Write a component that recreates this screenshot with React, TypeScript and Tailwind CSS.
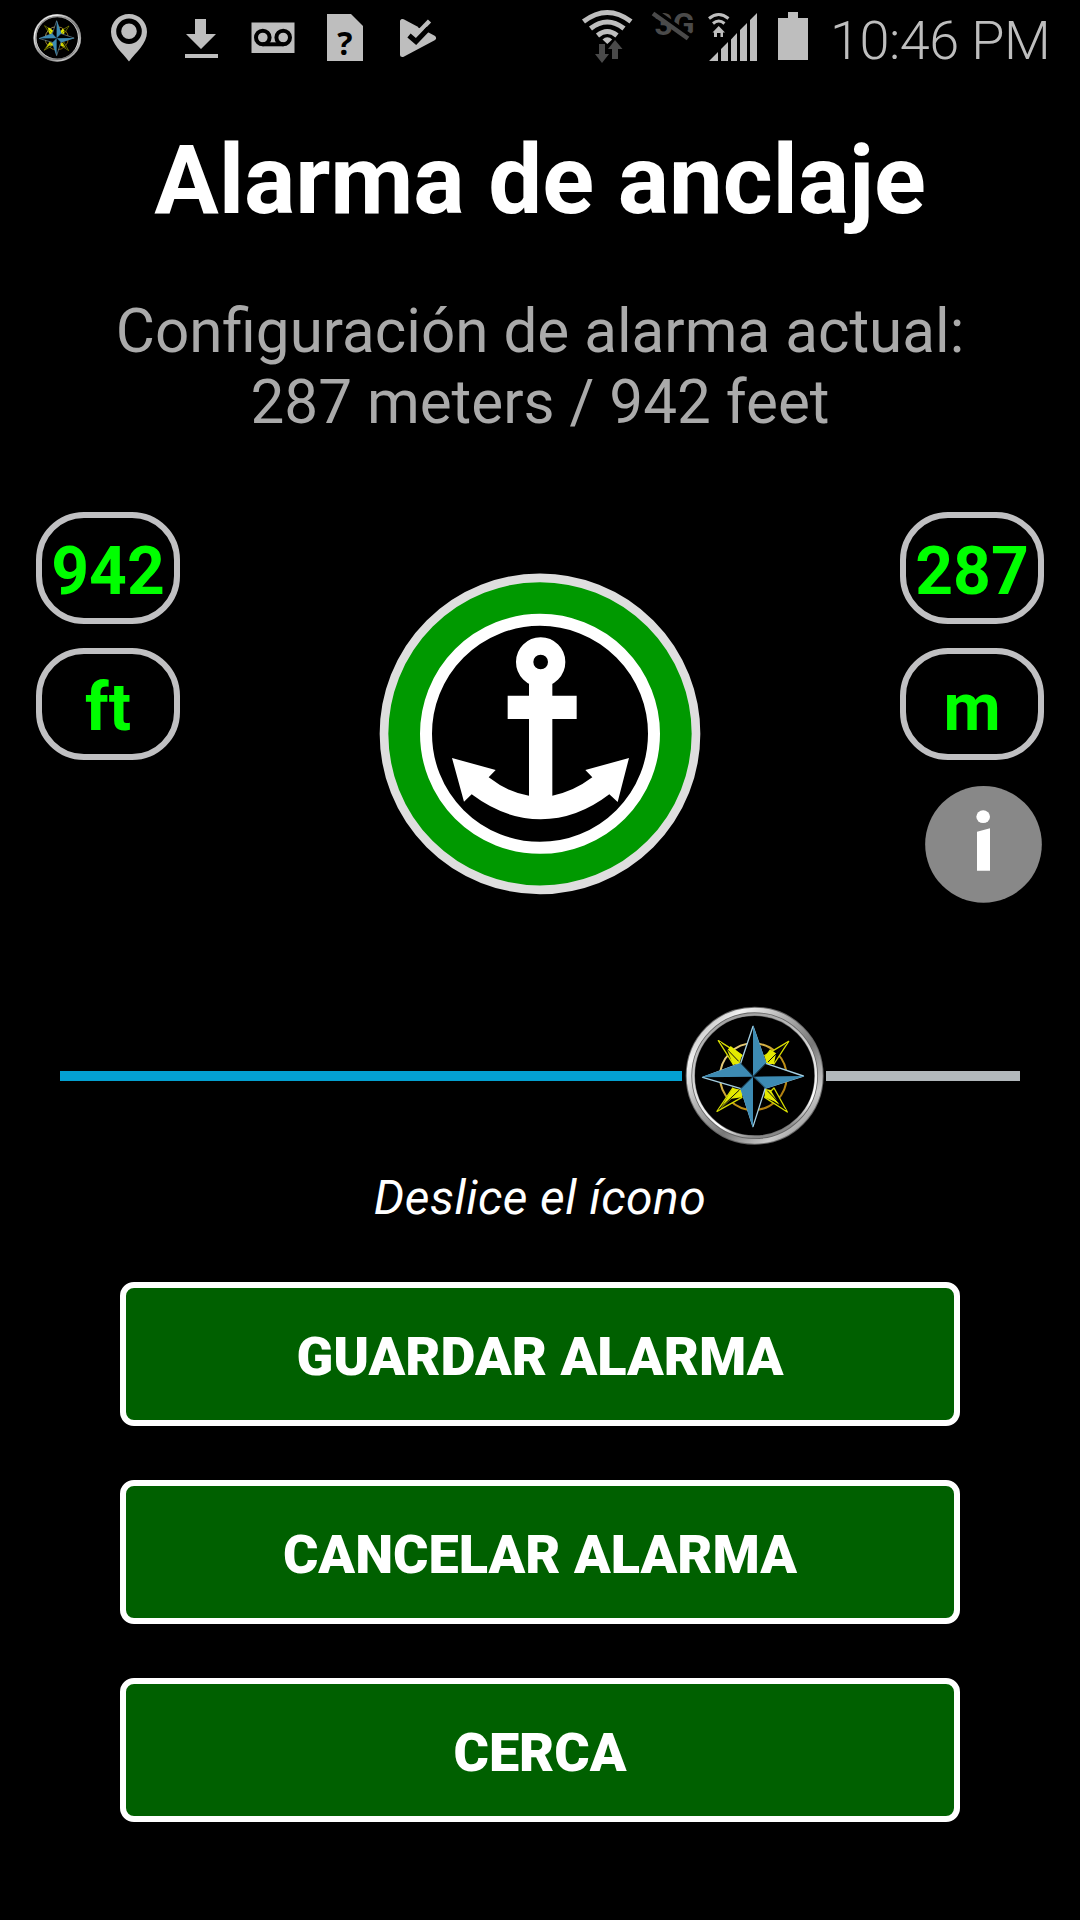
import { useId } from 'react';

function Compass({ className }: { className?: string }) {
  const id = useId();

  return (
    <svg className={className} viewBox="36 42 432 432">
      <defs>
        <linearGradient id={`${id}-rim`} x1="0" y1="0" x2="1" y2="1">
          <stop offset="0" stopColor="#8a8a8a" />
          <stop offset="0.2" stopColor="#f2f2f2" />
          <stop offset="0.38" stopColor="#b5b5b5" />
          <stop offset="0.6" stopColor="#777" />
          <stop offset="0.8" stopColor="#c9c9c9" />
          <stop offset="1" stopColor="#666" />
        </linearGradient>
        <linearGradient id={`${id}-edge`} x1="0.2" y1="0" x2="0.5" y2="1">
          <stop offset="0" stopColor="#999" />
          <stop offset="0.5" stopColor="#ddd" />
          <stop offset="0.85" stopColor="#fff" />
          <stop offset="1" stopColor="#888" />
        </linearGradient>
        <linearGradient id={`${id}-gold`} x1="0" y1="0" x2="1" y2="1">
          <stop offset="0" stopColor="#f3e3a8" />
          <stop offset="0.5" stopColor="#c79a1a" />
          <stop offset="1" stopColor="#a8740c" />
        </linearGradient>
      </defs>
      <circle cx="254" cy="257" r="193" fill="#000" stroke="#666" strokeWidth="28" />
      <circle cx="254" cy="257" r="197" fill="none" stroke={`url(#${id}-rim)`} strokeWidth="14" />
      <circle cx="254" cy="257" r="184" fill="none" stroke={`url(#${id}-edge)`} strokeWidth="7" />
      <circle cx="250" cy="260" r="100" fill="none" stroke={`url(#${id}-gold)`} strokeWidth="6" />
      <g fill="#000" stroke="#d6dc00" strokeWidth="4" strokeLinejoin="round">
        <path d="M145 152L216 196L190 223Z" />
        <path d="M356 154L312 222L284 197Z" />
        <path d="M352 366L284 322L312 294Z" />
        <path d="M141 364L188 294L216 322Z" />
      </g>
      <g fill="#e4ea00">
        <path d="M172 181L182 168L216 194L208 222L189 224Z" />
        <path d="M300 178L318 190L312 222L290 222L284 200Z" />
        <path d="M284 296L302 300L328 344L312 334L284 322Z" />
        <path d="M150 358L188 294L216 300L216 322L184 326Z" />
      </g>
      <g stroke="#111" strokeWidth="3">
        <path d="M150 156L206 214" />
        <path d="M350 160L294 216" />
        <path d="M347 360L292 302" />
        <path d="M146 359L208 300" />
      </g>
      <path
        d="M249 109L287 220L400 258L286 294L249 410L213 296L98 262L212 220Z"
        fill="#000"
        stroke="#a5cfe2"
        strokeWidth="4"
        strokeLinejoin="round"
      />
      <g fill="#3d8bb3">
        <path d="M249 105L289 220L249 260Z" />
        <path d="M94 262L212 219L249 260Z" />
        <path d="M249 414L211 296L249 260Z" />
        <path d="M404 258L286 296L249 260Z" />
      </g>
      <path d="M212 220L286 294M287 220L213 296" stroke="#1d3f52" strokeWidth="3" />
    </svg>
  );
}

function Notifications() {
  return (
    <div className="flex items-center">
      <div className="flex h-[75px] w-[72px] items-center justify-center pt-px">
        <Compass className="h-[50px] w-[50px]" />
      </div>
      <svg className="h-[75px] w-[72px]" viewBox="0 0 72 75" fill="#bebebe">
        <path d="M36 14C25.700 14 18 22 18 32C18 44 29 52 36 61.500C43 52 54 44 54 32C54 22 46.300 14 36 14Z" />
        <circle cx="36" cy="31.200" r="10.300" stroke="#000" strokeWidth="5" />
      </svg>
      <svg className="h-[75px] w-[72px]" viewBox="0 0 72 75" fill="#bebebe">
        <path d="M30 19H41V34H51L36 49L21 34H30ZM20 54H53V58H20Z" />
      </svg>
      <svg className="h-[75px] w-[72px]" viewBox="0 0 72 75">
        <path d="M14.500 22.500H57.500V53H14.500Z" fill="#bebebe" />
        <g fill="none" stroke="#000" strokeWidth="4">
          <circle cx="25.800" cy="37.500" r="6.800" />
          <circle cx="46.200" cy="37.500" r="6.800" />
          <path d="M25.500 44.300H46.500" />
        </g>
      </svg>
      <svg className="h-[75px] w-[72px]" viewBox="0 0 72 75">
        <path d="M18 14H42L54 26V61H18Z" fill="#bebebe" />
        <text
          x="36"
          y="54.500"
          textAnchor="middle"
          className="font-['Open_Sans'] text-[32px] font-bold"
        >
          ?
        </text>
      </svg>
      <svg className="h-[75px] w-[72px]" viewBox="0 0 72 75">
        <path
          d="M21.500 21.500V54.500L52.500 38Z"
          fill="#bebebe"
          stroke="#bebebe"
          strokeWidth="5"
          strokeLinejoin="round"
        />
        <path d="M37 27.500L46 31.500L58 30L50 14Z" fill="#000" />
        <path d="M34 36L48.500 21" stroke="#bebebe" strokeWidth="4.500" />
        <path d="M28 35.500L35 41.500L47.500 28.500" fill="none" stroke="#000" strokeWidth="5" />
      </svg>
    </div>
  );
}

function SystemIcons() {
  return (
    <div className="flex items-center">
      <svg className="h-[75px] w-[70px]" viewBox="577 0 70 75">
        <g fill="none" stroke="#bebebe" strokeWidth="5">
          <path d="M583.500 21.500Q607.300 3.500 631 21.500" />
          <path d="M590.500 28.500Q607.300 15.500 624 28.500" />
          <path d="M597.500 35.500Q607.300 27.500 617 35.500" />
        </g>
        <path d="M602.500 39.500Q607.300 35 612.200 39.500L607.300 44Z" fill="#bebebe" />
        <path
          d="M599 44H605V54H609L602 63L595 54H599ZM612 59H618V49H622.500L615 40L608 49H612Z"
          fill="#4a4a4a"
        />
      </svg>
      <svg className="h-[75px] w-[56px]" viewBox="647 0 56 75">
        <text x="654.500" y="35" className="font-[Roboto] text-[32px] font-bold" fill="#4a4a4a">
          3G
        </text>
        <path d="M655 10.500L690 35.500" stroke="#000" strokeWidth="4" />
        <path d="M653 13.500L688 38.500" stroke="#4a4a4a" strokeWidth="4.500" />
      </svg>
      <svg className="h-[75px] w-[65px]" viewBox="703 0 65 75">
        <g fill="none" stroke="#bebebe" strokeWidth="3">
          <path d="M709 18.500Q718.700 10.500 728.500 18.500" />
          <path d="M713 23.500Q718.700 18.500 724.500 23.500" />
        </g>
        <path d="M718.700 26L725 32.500H723V37H720.500V33H717V37H714V32.500H712.500Z" fill="#bebebe" />
        <path
          d="M709 61L718 52V61ZM721 61V49L728 42V61ZM731 61V39.500L737 33V61ZM740 61V30L747 23V61ZM750 61V20L757 13V61Z"
          fill="#bebebe"
        />
      </svg>
      <svg className="h-[75px] w-[62px]" viewBox="768 0 62 75">
        <path d="M788 12H798V18H808V60H778V18H788Z" fill="#bebebe" />
      </svg>
    </div>
  );
}

function StatusBar() {
  return (
    <header className="flex h-[75px] justify-between pr-[28px] pl-[21px] text-[#bebebe]">
      <Notifications />
      <div className="flex items-center">
        <SystemIcons />
        <span className="w-[222px] pt-[6px] text-[54px] leading-[64px] font-[360] tracking-[-0.5px] whitespace-nowrap">
          10:46 PM
        </span>
      </div>
    </header>
  );
}

function Anchor() {
  return (
    <svg className="mt-12 h-[340px] w-[340px]" viewBox="0 0 1020 1020">
      <circle cx="510" cy="521.500" r="468" fill="#009900" stroke="#dedede" strokeWidth="26" />
      <circle cx="510" cy="521.500" r="342" fill="#000" stroke="#fff" strokeWidth="36" />
      <circle cx="512" cy="306" r="48" fill="none" stroke="#fff" strokeWidth="52" />
      <g fill="#fff">
        <path d="M477 360H547V407H620V477H547V707Q610 695 667 652L646 630L777 594L743 726L718 703Q620 778 512 778Q405 778 305 703L282 725L246 594L377 630L356 652Q415 698 477 707V477H413V407H477Z" />
      </g>
    </svg>
  );
}

function Badge({ children }: { children: string }) {
  return (
    <div className="flex h-[112px] w-[144px] items-center justify-center rounded-[48px] border-[6px] border-[#c0c0c2] pt-[7px] text-[66px] leading-[78px] font-bold text-[#00ff00]">
      {children}
    </div>
  );
}

const actions = ['GUARDAR ALARMA', 'CANCELAR ALARMA', 'CERCA'];

export default function App() {
  return (
    <div className="flex h-[1920px] w-[1080px] flex-col overflow-hidden bg-black font-[Roboto,sans-serif] text-white">
      <StatusBar />
      <h1 className="mt-[49px] text-center text-[96px] leading-[112px] font-bold tracking-[-0.12px]">
        Alarma de anclaje
      </h1>
      <p className="mt-[60px] text-center text-[60.2px] leading-[71px] text-[#aaaaaa]">
        Configuración de alarma actual:
        <br />
        287 meters / 942 feet
      </p>

      <section className="mt-[74px] flex h-[392px] items-start justify-between px-9">
        <div className="flex flex-col gap-6">
          <Badge>942</Badge>
          <Badge>ft</Badge>
        </div>
        <Anchor />
        <div className="flex flex-col gap-6">
          <Badge>287</Badge>
          <Badge>m</Badge>
          <button className="mt-[2px] mr-[2px] self-end" aria-label="Info">
            <svg className="h-[117px] w-[117px]" viewBox="0 0 351 351">
              <circle cx="175.500" cy="175" r="175" fill="#888" />
              <ellipse cx="174.500" cy="92" rx="20.500" ry="19" fill="#fff" />
              <path d="M156 137L195 127V254H156Z" fill="#fff" />
            </svg>
          </button>
        </div>
      </section>

      <div className="mx-[60px] mt-[100px] flex h-36 items-center">
        <div className="h-[10px] w-[622px] bg-[#03a0d1]" />
        <Compass className="h-36 w-36" />
        <div className="h-[10px] flex-1 bg-[#b2b8bb]" />
      </div>
      <p className="mt-[22px] text-center text-5xl leading-[56px] tracking-[0.45px] italic">Deslice el ícono</p>

      <div className="mt-14 flex flex-col gap-[54px] px-[120px]">
        {actions.map((label) => (
          <button
            key={label}
            className="h-36 rounded-[14px] border-[6px] border-white bg-[#006000] pt-[5px] text-[54px] leading-[64px] font-[860]"
          >
            {label}
          </button>
        ))}
      </div>
    </div>
  );
}
